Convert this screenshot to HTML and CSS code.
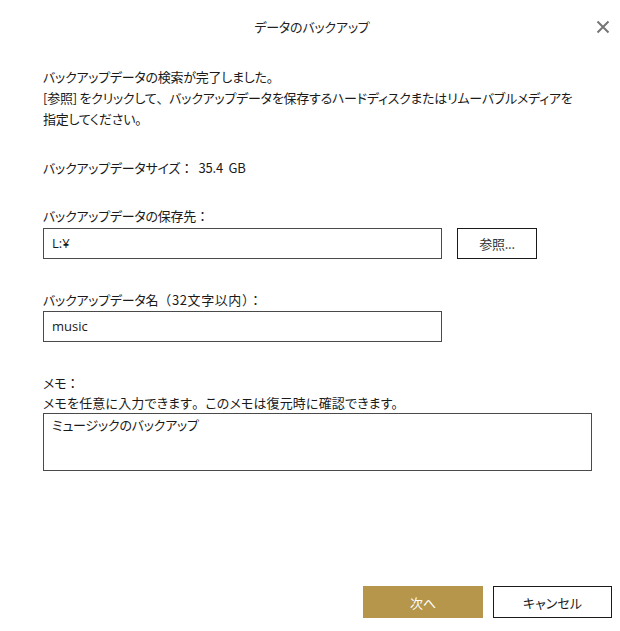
FILE: index.html
```html
<!DOCTYPE html>
<html lang="ja">
<head>
<meta charset="utf-8">
<link rel="stylesheet" href="styles.css">
</head>
<body>
<div class="dialog">
  <div class="header">
    <div class="title">データのバックアップ</div>
    <div class="close">
      <svg width="14" height="14" viewBox="0 0 14 14"><path d="M1.5 1.5 L12.5 12.5 M12.5 1.5 L1.5 12.5" stroke="#767676" stroke-width="2" fill="none"/></svg>
    </div>
  </div>
  <div class="content">
    <p class="intro">バックアップデータの検索が完了しました。<br>[参照] をクリックして<span class="fw">、</span>バックアップデータを保存するハードディスクまたはリムーバブルメディアを<br>指定してください。</p>
    <p class="size">バックアップデータサイズ<span class="fw">：</span> 35.4 GB</p>
    <div class="field dest">
      <div class="label">バックアップデータの保存先<span class="fw">：</span></div>
      <div class="row">
        <div class="input">L:¥</div>
        <div class="btn browse">参照...</div>
      </div>
    </div>
    <div class="field name">
      <div class="label">バックアップデータ名<span class="fw wide">（32文字以内）：</span></div>
      <div class="row">
        <div class="input">music</div>
      </div>
    </div>
    <div class="field memo">
      <div class="label tight">メモ<span class="fw">：</span></div>
      <div class="label tight desc">メモを任意に入力できます<span class="fw">。</span>このメモは復元時に確認できます。</div>
      <div class="textarea">ミュージックのバックアップ</div>
    </div>
  </div>
  <div class="footer">
    <div class="btn primary">次へ</div>
    <div class="btn secondary">キャンセル</div>
  </div>
</div>
</body>
</html>
```

FILE: styles.css
```css
* { box-sizing: border-box; }
html, body { margin: 0; padding: 0; background: #fff; }
body {
  font-family: "Noto Sans CJK JP", "Noto Sans", sans-serif;
  font-feature-settings: "palt";
  font-size: 13px;
  color: #1a1a1a;
}
.fw { font-feature-settings: normal; }
.fw.wide { letter-spacing: 0.6px; }
.dialog {
  width: 620px;
  height: 631px;
  display: flex;
  flex-direction: column;
}
.header {
  position: relative;
  height: 55px;
  display: flex;
  align-items: center;
  justify-content: center;
}
.title {
  font-size: 13px;
  color: #222;
  line-height: 20px;
  margin-top: -2px;
  letter-spacing: -0.2px;
  padding-left: 4px;
}
.close {
  position: absolute;
  right: 10px;
  top: 20px;
  width: 14px;
  height: 14px;
  display: flex;
}
.content {
  padding: 11px 0 0 43px;
  letter-spacing: -0.25px;
}
p { margin: 0; }
.intro { line-height: 21px; }
.size { margin-top: 28px; line-height: 21px; word-spacing: 3px; }
.field { margin-top: 27px; }
.field.name { margin-top: 30px; }
.field.memo { margin-top: 31px; }
.label { line-height: 21px; }
.label.tight { line-height: 20px; }
.label.desc { letter-spacing: 0.15px; }
.row {
  display: flex;
  gap: 15px;
  margin-top: 2px;
}
.field.name .row { margin-top: 1px; }
.input {
  width: 399px;
  height: 31px;
  border: 1px solid #4a4a4a;
  padding: 0 8px;
  line-height: 29px;
  font-family: "Open Sans", "Noto Sans CJK JP", sans-serif;
  font-size: 13px;
  letter-spacing: 0;
}
.textarea {
  width: 549px;
  height: 58px;
  border: 1px solid #4a4a4a;
  padding: 1px 8px;
  line-height: 20px;
}
.btn {
  display: flex;
  align-items: center;
  justify-content: center;
  height: 31px;
}
.browse {
  width: 80px;
  border: 1px solid #1a1a1a;
  color: #333;
}
.footer {
  margin-top: auto;
  display: flex;
  justify-content: flex-end;
  gap: 10px;
  padding: 0 8px 13px 0;
}
.primary {
  width: 120px;
  height: 32px;
  background: #b5964b;
  color: #fff;
}
.secondary {
  width: 119px;
  height: 32px;
  border: 1px solid #1a1a1a;
  color: #1a1a1a;
}
```
